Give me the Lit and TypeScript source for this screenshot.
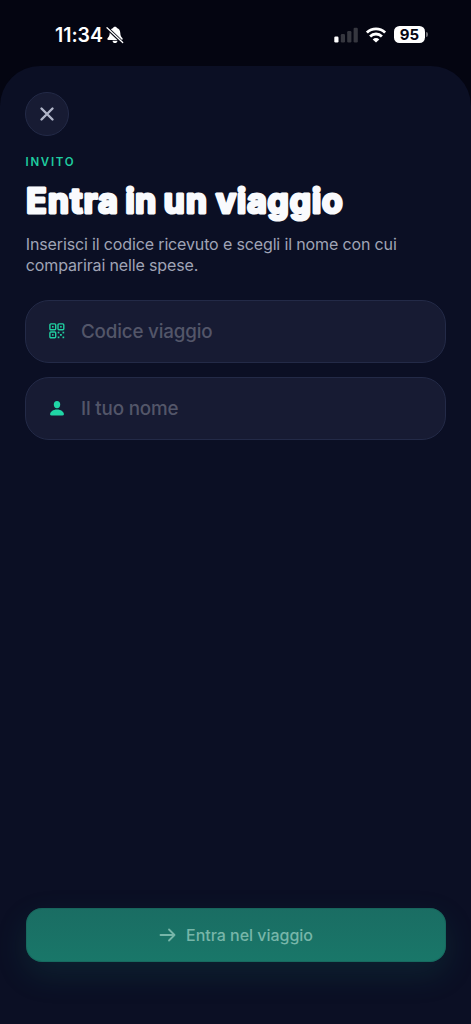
import { LitElement, html, css, svg } from "lit";
import { customElement, property } from "lit/decorators.js";

@customElement("status-bar")
class StatusBar extends LitElement {
  static styles = css`
    :host { display: flex; height: 66px; box-sizing: border-box; padding: 24px 43px 0 55px;
      justify-content: space-between; align-items: flex-start; color: #fff; }
    .group { display: flex; align-items: center; height: 21px; }
    .time { font-size: 19.5px; font-weight: 600; letter-spacing: -0.05px; line-height: 22px; width: 51px; white-space: nowrap; padding-top: 1px; }
    svg { display: block; }
    .signal { margin-right: 8px; }
    .wifi { margin-right: 8px; }
    .battery { display: flex; align-items: center; }
    .level { width: 31px; height: 17px; border-radius: 5.5px; background: #fff; color: #050612;
      font-size: 15px; line-height: 17px; font-weight: 700; text-align: center; }
    .tip { width: 2px; height: 5px; margin-left: 1px; border-radius: 0 2px 2px 0; background: #6c6d74; }
  `;
  render() {
    return html`
      <div class="group">
        <span class="time">11:34</span>
        <svg width="18" height="18" viewBox="0 0 18 18">
          <path fill="#fff" d="M9 .7c1 0 1.700.5 1.900 1.300 2.200.7 3.300 2.500 3.400 4.900.1 2.600.7 3.700 2 5 .8.9.4 2-.8 2H2.500c-1.200 0-1.600-1.100-.8-2 1.300-1.300 1.900-2.400 2-5C3.800 4.500 4.900 2.700 7.100 2 7.300 1.200 8 .7 9 .7zM6.500 14.800h5c-.2 1.500-1.200 2.300-2.500 2.300s-2.300-.8-2.500-2.300z"/>
          <path d="M.8 1.700 16.800 16.900" stroke="#040511" stroke-width="3.200"/>
          <path d="M1 1.700 16.700 16.500" stroke="#fff" stroke-width="1.300" stroke-linecap="round"/>
        </svg>
      </div>
      <div class="group">
        <svg class="signal" width="24" height="16" viewBox="0 0 24 16">
          <rect x="0.300" y="9.500" width="4.200" height="6" rx="1.200" fill="#fff"/>
          <rect x="6.800" y="7" width="4.200" height="8.500" rx="1.200" fill="#36373f"/>
          <rect x="13.200" y="4" width="4.200" height="11.500" rx="1.200" fill="#36373f"/>
          <rect x="19.600" y="0.700" width="4.200" height="14.800" rx="1.200" fill="#36373f"/>
        </svg>
        <svg class="wifi" width="20" height="16" viewBox="0 0 20 16" fill="none" stroke="#fff" stroke-width="2.800">
          <path d="M.9 5.600a13 13 0 0 1 18.200 0M4.100 9.400a8.400 8.400 0 0 1 11.800 0"/>
          <path d="M10 15.600 6.700 12.400a4.600 4.600 0 0 1 6.600 0z" fill="#fff" stroke="none"/>
        </svg>
        <div class="battery"><div class="level">95</div><div class="tip"></div></div>
      </div>`;
  }
}

const qrIcon = svg`
  <g fill="none" stroke="#20cfa0" stroke-width="1.400">
    <rect x="0.900" y="0.900" width="5.800" height="5.800" rx="1"/>
    <rect x="9" y="0.900" width="5.800" height="5.800" rx="1"/>
    <rect x="0.900" y="9" width="5.800" height="5.800" rx="1"/>
  </g>
  <g fill="#20cfa0">
    <rect x="3" y="3" width="1.600" height="1.600"/><rect x="11.100" y="3" width="1.600" height="1.600"/>
    <rect x="3" y="11.100" width="1.600" height="1.600"/><rect x="11" y="11" width="1.800" height="1.800"/>
    <rect x="8.700" y="8.700" width="1.700" height="1.700"/><rect x="13.500" y="8.700" width="1.700" height="1.700"/>
    <rect x="8.700" y="13.500" width="1.700" height="1.700"/><rect x="13.500" y="13.500" width="1.700" height="1.700"/>
  </g>`;

const personIcon = svg`
  <g fill="#20d6a6">
    <ellipse cx="8" cy="4.600" rx="3.200" ry="3.600"/>
    <path d="M8 9.600c4 0 6.900 2.300 6.900 4.600 0 .8-.5 1.200-1.400 1.200H2.500c-.9 0-1.400-.4-1.400-1.200 0-2.300 2.900-4.600 6.900-4.600z"/>
  </g>`;

@customElement("text-field")
class TextField extends LitElement {
  @property() label = "";
  @property() icon = "";
  static styles = css`
    :host { display: flex; align-items: center; box-sizing: border-box; height: 63px; padding-left: 22.5px;
      border: 1.500px solid #232a47; border-radius: 24px; background: #171b33; }
    svg { display: block; width: 17px; height: 17px; margin-right: 15.5px; }
    .placeholder { font-size: 18.8px; font-weight: 550; line-height: 24px; color: #535669; white-space: nowrap; letter-spacing: -0.18px; }
  `;
  render() {
    return html`
      <svg viewBox="0 0 17 17">${this.icon === "code" ? qrIcon : personIcon}</svg>
      <span class="placeholder">${this.label}</span>`;
  }
}

@customElement("app-root")
class AppRoot extends LitElement {
  static styles = css`
    :host { display: flex; flex-direction: column; width: 471px; height: 1024px; overflow: hidden;
      background: #040511; font-family: Inter, "Liberation Sans", sans-serif; }
    .sheet { flex: 1; display: flex; flex-direction: column; box-sizing: border-box; padding: 26px 25px 62px;
      border-radius: 40px 40px 0 0; background: #0b0f24; }
    .close { width: 44px; height: 44px; box-sizing: border-box; display: grid; place-items: center; padding: 0;
      border: 1.500px solid #232a47; border-radius: 50%; background: #171b33; }
    svg { display: block; }
    .eyebrow { margin-top: 18px; padding-left: 0.5px; font-size: 11.500px; line-height: 16px; font-weight: 600; letter-spacing: 1.700px; color: #1fcda0; }
    h1 { margin: 8px 0 0; height: 48px; }
    .title { font-size: 33.5px; font-weight: 700; fill: #f9fafd; stroke: #f9fafd; stroke-width: 3px; stroke-linejoin: round; }
    .intro { margin: 8px 0 0; padding-left: 0.8px; font-size: 16px; line-height: 21px; letter-spacing: -0.14px; color: #a0a4b6; white-space: nowrap; }
    .fields { display: flex; flex-direction: column; gap: 14px; margin-top: 24px; }
    .submit { margin: auto 0 0 1px; height: 54px; border: 0; border-radius: 16px; display: flex; align-items: center; justify-content: center;
      gap: 10px; font-family: inherit; font-size: 16px; font-weight: 550; letter-spacing: -0.03px; color: #77b6a9;
      background: linear-gradient(180deg, #1a6d63, #197769); box-shadow: 0 12px 32px rgba(26, 150, 120, 0.150), inset 0 0 0 1px rgba(20, 85, 80, 0.350); }
  `;
  render() {
    return html`
      <status-bar></status-bar>
      <main class="sheet">
        <button class="close" aria-label="Chiudi">
          <svg width="16" height="16" viewBox="0 0 16 16"><path d="M2.500 2.500 13.500 13.500M13.500 2.500 2.500 13.500" stroke="#b0b5c8" stroke-width="2.400" stroke-linecap="round"/></svg>
        </button>
        <div class="eyebrow">INVITO</div>
        <h1><svg width="330" height="48"><text class="title" y="35"><tspan x="1.300" textLength="91.500">Entra</tspan> <tspan x="100.500" textLength="30.500">in</tspan> <tspan x="138.800" textLength="43">un</tspan> <tspan x="191" textLength="126.500">viaggio</tspan></text></svg></h1>
        <p class="intro">Inserisci il codice ricevuto e scegli il nome con cui<br />comparirai nelle spese.</p>
        <div class="fields">
          <text-field icon="code" label="Codice viaggio"></text-field>
          <text-field icon="person" label="Il tuo nome"></text-field>
        </div>
        <button class="submit">
          <svg width="17" height="14" viewBox="0 0 17 14" fill="none" stroke="#77b6a9" stroke-width="1.800" stroke-linecap="round" stroke-linejoin="round"><path d="M1.500 7H15.500M10 1.500 15.500 7 10 12.500"/></svg>
          <span>Entra nel viaggio</span>
        </button>
      </main>`;
  }
}
